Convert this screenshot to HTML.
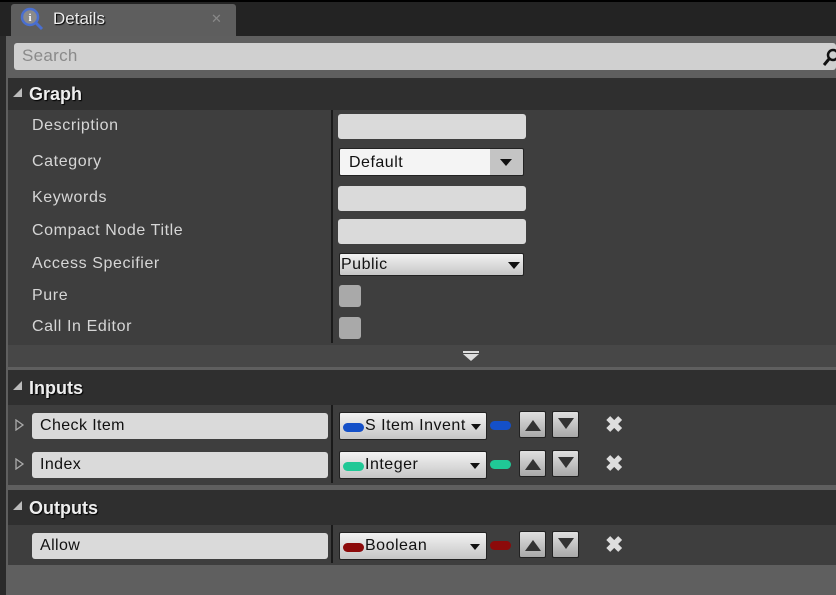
<!DOCTYPE html>
<html><head><meta charset="utf-8"><style>
*{margin:0;padding:0;box-sizing:border-box}
body{width:836px;height:595px;overflow:hidden;background:#5f5f5f;font-family:"Liberation Sans",sans-serif;position:relative}
div{position:absolute}
.lbl{color:#d6d6d6;font-size:16px;letter-spacing:0.6px;left:32px}
.hdr{left:8px;right:0;background:#2f2f2f;color:#eee;font-weight:bold;font-size:18px;text-shadow:1px 1px 1px #000}
.hdr span{position:absolute;left:21px;top:6px}
.tri{position:absolute;left:5px;width:0;height:0;border-left:9px solid transparent;border-bottom:9px solid #bbb}
.rows{left:8px;right:0;background:#3e3e3e}
.in{background:#dadada;border-radius:3px}
.cb{background:#a9a9a9;border-radius:3px;width:22px;height:22px;left:339px}
.dd{background:linear-gradient(#f2f2f2,#c6c6c6);border:1px solid #222;border-radius:2px;font-size:16px;color:#111;letter-spacing:0.5px}
.arr{position:absolute;width:0;height:0;border-left:6px solid transparent;border-right:6px solid transparent;border-top:7px solid #111}
.pill{width:21px;height:9px;border-radius:5px}
.btn{width:27px;height:27px;background:linear-gradient(#e0e0e0,#a8a8a8);border:1px solid #222;border-radius:2px}
.up{position:absolute;left:5px;top:8px;border-left:8px solid transparent;border-right:8px solid transparent;border-bottom:11px solid #333;width:0;height:0}
.dn{position:absolute;left:5px;top:6px;border-left:8px solid transparent;border-right:8px solid transparent;border-top:11px solid #333;width:0;height:0}
.x{color:#ddd;font-size:22px;font-weight:bold;left:605px}
.intext{position:absolute;left:8px;top:4px;font-size:16px;color:#111;letter-spacing:0.4px}
</style></head><body>
<div style="left:0;top:0;width:836px;height:36px;background:#232323;border-top:2px solid #000"></div>
<div style="left:0;top:36px;width:6px;height:559px;background:#2a2a2a"></div>
<div style="left:11px;top:4px;width:225px;height:32px;background:#5e5e5e;border-radius:3px 3px 0 0"></div>
<svg style="position:absolute;left:19px;top:6px" width="26" height="26"><circle cx="11" cy="11" r="8" fill="#8a8a8a" stroke="#4a6fd0" stroke-width="2.5"/><line x1="16" y1="16" x2="23" y2="23" stroke="#4a6fd0" stroke-width="3"/><text x="11" y="15" font-size="11" font-weight="bold" fill="#fff" text-anchor="middle" font-family="Liberation Serif">i</text></svg>
<div style="left:53px;top:9px;color:#eee;font-size:17px;text-shadow:1px 1px 1px #000">Details</div>
<div style="left:211px;top:11px;color:#888;font-size:13px">✕</div>
<div style="left:14px;top:43px;width:822px;height:27px;background:#d0d0d0;border-radius:3px"></div>
<div style="left:22px;top:46px;color:#8a8a8a;font-size:17px;letter-spacing:0.3px">Search</div>
<svg style="position:absolute;left:823px;top:46px" width="13" height="22"><circle cx="10" cy="9" r="5" fill="none" stroke="#111" stroke-width="2.5"/><line x1="6" y1="13" x2="1" y2="19" stroke="#111" stroke-width="3"/></svg>

<div class="hdr" style="top:78px;height:32px"><div class="tri" style="top:10px"></div><span>Graph</span></div>
<div class="rows" style="top:110px;height:235px"></div>
<div style="left:331px;top:110px;width:2px;height:233px;background:#1a1a1a"></div>
<div class="lbl" style="top:117px">Description</div>
<div class="lbl" style="top:153px">Category</div>
<div class="lbl" style="top:189px">Keywords</div>
<div class="lbl" style="top:222px">Compact Node Title</div>
<div class="lbl" style="top:255px">Access Specifier</div>
<div class="lbl" style="top:287px">Pure</div>
<div class="lbl" style="top:318px">Call In Editor</div>
<div class="in" style="left:338px;top:114px;width:188px;height:25px"></div>
<div class="dd" style="left:339px;top:148px;width:185px;height:28px;background:linear-gradient(90deg,#f4f4f4 0,#f4f4f4 82%,#c4c4c4 82%)"><span style="position:absolute;left:9px;top:5px">Default</span><div class="arr" style="left:160px;top:10px"></div></div>
<div class="in" style="left:338px;top:186px;width:188px;height:25px"></div>
<div class="in" style="left:338px;top:219px;width:188px;height:25px"></div>
<div class="dd" style="left:339px;top:253px;width:185px;height:23px"><span style="position:absolute;left:1px;top:2px">Public</span><div class="arr" style="left:168px;top:8px"></div></div>
<div class="cb" style="top:285px"></div>
<div class="cb" style="top:317px"></div>
<div style="left:8px;top:345px;right:0;height:22px;background:#474747"></div>
<div style="left:463px;top:351px;width:16px;height:2px;background:#ddd"></div>
<div style="left:463px;top:354px;width:0;height:0;border-left:8px solid transparent;border-right:8px solid transparent;border-top:7px solid #ddd"></div>

<div class="hdr" style="top:370px;height:35px"><div class="tri" style="top:11px"></div><span style="top:8px">Inputs</span></div>
<div class="rows" style="top:405px;height:80px"></div>
<div style="left:331px;top:405px;width:2px;height:78px;background:#1a1a1a"></div>
<svg style="position:absolute;left:15px;top:419px" width="10" height="12"><polygon points="1,1 8,6 1,11" fill="none" stroke="#aaa" stroke-width="1.3"/></svg>
<svg style="position:absolute;left:15px;top:458px" width="10" height="12"><polygon points="1,1 8,6 1,11" fill="none" stroke="#aaa" stroke-width="1.3"/></svg>
<div class="in" style="left:32px;top:413px;width:296px;height:26px"><span class="intext">Check Item</span></div>
<div class="in" style="left:32px;top:452px;width:296px;height:26px"><span class="intext">Index</span></div>

<div class="dd" style="left:339px;top:412px;width:148px;height:28px"><div class="pill" style="left:3px;top:10px;background:#1450c8"></div><span style="position:absolute;left:25px;top:4px">S Item Invent</span><div class="arr" style="left:131px;top:11px;border-left-width:5px;border-right-width:5px;border-top-width:6px"></div></div>
<div class="pill" style="left:490px;top:421px;background:#1450c8"></div>
<div class="dd" style="left:339px;top:451px;width:148px;height:28px"><div class="pill" style="left:3px;top:10px;background:#20c896"></div><span style="position:absolute;left:25px;top:4px">Integer</span><div class="arr" style="left:130px;top:11px;border-left-width:5px;border-right-width:5px;border-top-width:6px"></div></div>
<div class="pill" style="left:490px;top:460px;background:#20c896"></div>
<div class="btn" style="left:519px;top:411px"><div class="up"></div></div>
<div class="btn" style="left:552px;top:411px"><div class="dn"></div></div>
<div class="btn" style="left:519px;top:450px"><div class="up"></div></div>
<div class="btn" style="left:552px;top:450px"><div class="dn"></div></div>
<div class="x" style="top:412px">✖</div>
<div class="x" style="top:451px">✖</div>

<div class="hdr" style="top:490px;height:35px"><div class="tri" style="top:11px"></div><span style="top:8px">Outputs</span></div>
<div class="rows" style="top:525px;height:40px"></div>
<div style="left:331px;top:525px;width:2px;height:38px;background:#1a1a1a"></div>
<div class="in" style="left:32px;top:533px;width:296px;height:26px"><span class="intext">Allow</span></div>
<div class="dd" style="left:339px;top:532px;width:148px;height:28px"><div class="pill" style="left:3px;top:10px;background:#8c0a0a"></div><span style="position:absolute;left:25px;top:4px">Boolean</span><div class="arr" style="left:130px;top:11px;border-left-width:5px;border-right-width:5px;border-top-width:6px"></div></div>
<div class="pill" style="left:490px;top:541px;background:#8c0a0a"></div>
<div class="btn" style="left:519px;top:531px"><div class="up"></div></div>
<div class="btn" style="left:552px;top:531px"><div class="dn"></div></div>
<div class="x" style="top:532px">✖</div>
</body></html>
